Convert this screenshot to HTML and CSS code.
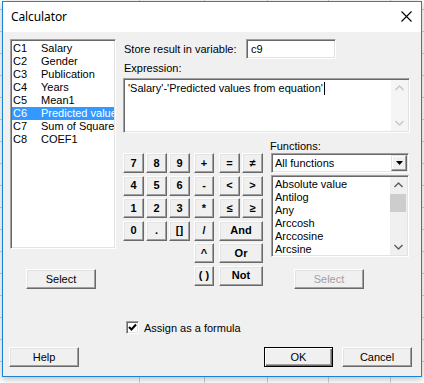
FILE: index.html
```html
<!DOCTYPE html>
<html>
<head>
<meta charset="utf-8">
<link rel="stylesheet" href="styles.css">
</head>
<body>
<div class="window">
  <div class="titlebar">
    <span class="title">Calculator</span>
    <svg class="close" width="11" height="11" viewBox="0 0 11 11"><path d="M0.5 0.5 L10.5 10.5 M10.5 0.5 L0.5 10.5" stroke="#000" stroke-width="1.1" fill="none"/></svg>
  </div>
  <div class="client">
    <div class="top">
      <div class="leftcol">
        <div class="sunken vars">
          <div class="item"><span class="cn">C1</span><span>Salary</span></div>
          <div class="item"><span class="cn">C2</span><span>Gender</span></div>
          <div class="item"><span class="cn">C3</span><span>Publication</span></div>
          <div class="item"><span class="cn">C4</span><span>Years</span></div>
          <div class="item"><span class="cn">C5</span><span>Mean1</span></div>
          <div class="item sel"><span class="cn">C6</span><span>Predicted values from equation</span></div>
          <div class="item"><span class="cn">C7</span><span>Sum of Squares</span></div>
          <div class="item"><span class="cn">C8</span><span>COEF1</span></div>
        </div>
        <div class="btn select-left">Select</div>
      </div>
      <div class="rightcol">
        <div class="storerow">
          <span class="storelabel">Store result in variable:</span>
          <div class="sunken field">c9</div>
        </div>
        <div class="exprlabel">Expression:</div>
        <div class="sunken exprbox">
          <div class="exprtext">'Salary'-'Predicted values from equation'<span class="caret"></span></div>
          <div class="vscroll off">
            <svg width="17" height="17" viewBox="0 0 17 17"><path d="M4.5 10 L8.5 6 L12.5 10" stroke="#c8c8c8" stroke-width="1.5" fill="none"/></svg>
            <svg width="17" height="17" viewBox="0 0 17 17"><path d="M4.5 7 L8.5 11 L12.5 7" stroke="#c8c8c8" stroke-width="1.5" fill="none"/></svg>
          </div>
        </div>
        <div class="lower">
          <div class="keypad">
            <div class="kgrid digits">
              <div class="btn key">7</div><div class="btn key">8</div><div class="btn key">9</div>
              <div class="btn key">4</div><div class="btn key">5</div><div class="btn key">6</div>
              <div class="btn key">1</div><div class="btn key">2</div><div class="btn key">3</div>
              <div class="btn key">0</div><div class="btn key">.</div><div class="btn key">[]</div>
            </div>
            <div class="kgrid ops">
              <div class="btn key">+</div>
              <div class="btn key">-</div>
              <div class="btn key">*</div>
              <div class="btn key">/</div>
              <div class="btn key">^</div>
              <div class="btn key">( )</div>
            </div>
            <div class="kgrid rel">
              <div class="btn key">=</div><div class="btn key">≠</div>
              <div class="btn key">&lt;</div><div class="btn key">&gt;</div>
              <div class="btn key">≤</div><div class="btn key">≥</div>
              <div class="btn key wide">And</div>
              <div class="btn key wide">Or</div>
              <div class="btn key wide">Not</div>
            </div>
          </div>
          <div class="funcs">
            <div class="funclabel">Functions:</div>
            <div class="sunken dropdown">
              <span class="ddtext">All functions</span>
              <div class="ddbtn"><svg width="7" height="4" viewBox="0 0 7 4"><path d="M0 0 H7 L3.5 4 Z" fill="#000"/></svg></div>
            </div>
            <div class="sunken funclist">
              <div class="fitems">
                <div class="fitem">Absolute value</div>
                <div class="fitem">Antilog</div>
                <div class="fitem">Any</div>
                <div class="fitem">Arccosh</div>
                <div class="fitem">Arccosine</div>
                <div class="fitem">Arcsine</div>
              </div>
              <div class="vscroll on">
                <svg width="17" height="17" viewBox="0 0 17 17"><path d="M4.5 10 L8.5 6 L12.5 10" stroke="#606060" stroke-width="1.5" fill="none"/></svg>
                <div class="thumb"></div>
                <div class="track"></div>
                <svg width="17" height="17" viewBox="0 0 17 17"><path d="M4.5 7 L8.5 11 L12.5 7" stroke="#606060" stroke-width="1.5" fill="none"/></svg>
              </div>
            </div>
            <div class="btn disabled select-right">Select</div>
          </div>
        </div>
      </div>
    </div>
    <div class="checkrow">
      <div class="checkbox"><svg width="9" height="9" viewBox="0 0 9 9"><path d="M1 4 L3.5 6.5 L8 1.5" stroke="#000" stroke-width="2" fill="none"/></svg></div>
      <span>Assign as a formula</span>
    </div>
    <div class="buttonrow">
      <div class="btn help">Help</div>
      <div class="rightbtns">
        <div class="btn default">OK</div>
        <div class="btn">Cancel</div>
      </div>
    </div>
  </div>
</div>
</body>
</html>
```

FILE: styles.css
```css
html, body {
  margin: 0;
  padding: 0;
}
body {
  width: 424px;
  height: 383px;
  overflow: hidden;
  font-family: "Liberation Sans", Arial, sans-serif;
  font-size: 11px;
  color: #000;
  background-color: #fff;
  background-image:
    linear-gradient(to right,
      transparent 139px, #d0d0d0 139px, #d0d0d0 140px, transparent 140px,
      transparent 204px, #d0d0d0 204px, #d0d0d0 205px, transparent 205px,
      transparent 267px, #d0d0d0 267px, #d0d0d0 268px, transparent 268px,
      transparent 328px, #d0d0d0 328px, #d0d0d0 329px, transparent 329px,
      transparent 390px, #d0d0d0 390px, #d0d0d0 391px, transparent 391px),
    repeating-linear-gradient(to bottom,
      transparent 0, transparent 9px, #d0d0d0 9px, #d0d0d0 10px, transparent 10px, transparent 22px);
}
.window {
  position: absolute;
  left: 2px;
  top: 1px;
  width: 418px;
  height: 374px;
  border: 1px solid #1883d7;
  background: #f0f0f0;
  display: flex;
  flex-direction: column;
  box-shadow: 0 2px 7px rgba(0, 0, 0, 0.28);
}
.titlebar {
  height: 30px;
  flex: none;
  background: #fff;
  display: flex;
  align-items: center;
  justify-content: space-between;
  padding: 0 9px 0 8px;
}
.title {
  font-family: "Noto Sans", "Open Sans", sans-serif;
  font-size: 12px;
  letter-spacing: -0.1px;
  margin-top: -1px;
}
.close {
  display: block;
  margin-top: -1px;
}
.client {
  flex: 1;
  display: flex;
  flex-direction: column;
  padding: 7px 0 0 7px;
}
.top {
  display: flex;
  align-items: flex-start;
}
.sunken {
  box-sizing: border-box;
  background: #fff;
  border: 1px solid;
  border-color: #a0a0a0 #fff #fff #a0a0a0;
  box-shadow: inset 1px 1px #696969, inset -1px -1px #e3e3e3;
}
.leftcol {
  width: 106px;
  display: flex;
  flex-direction: column;
}
.vars {
  height: 210px;
  padding: 2px 1px 1px 1px;
  overflow: hidden;
}
.item {
  display: flex;
  height: 13px;
  line-height: 13px;
  padding-left: 1px;
  white-space: nowrap;
  overflow: hidden;
}
.item .cn {
  width: 28px;
  flex: none;
}
.item.sel {
  background: #3399ff;
  color: #fff;
}
.btn {
  box-sizing: border-box;
  width: 70px;
  height: 20px;
  background: #f0f0f0;
  border: 1px solid;
  border-color: #fff #696969 #696969 #fff;
  box-shadow: inset -1px -1px #a0a0a0, inset 1px 1px #e3e3e3;
  display: flex;
  align-items: center;
  justify-content: center;
  line-height: 13px;
  white-space: nowrap;
}
.btn.disabled {
  color: #a0a0a0;
}
.btn.default {
  border-color: #000;
  box-shadow: inset 1px 1px #fff, inset -1px -1px #696969, inset -2px -2px #a0a0a0;
  width: 69px;
}
.select-left {
  margin: 20px 0 0 16px;
}
.rightcol {
  margin-left: 7px;
  width: 287px;
}
.storerow {
  display: flex;
  align-items: center;
  height: 20px;
}
.storelabel {
  width: 122px;
  padding-left: 1px;
}
.field {
  width: 90px;
  height: 20px;
  padding: 2px 4px;
  line-height: 14px;
}
.exprlabel {
  height: 19px;
  line-height: 19px;
  padding-left: 1px;
}
.exprbox {
  height: 55px;
  display: flex;
  padding: 1px;
}
.exprtext {
  flex: 1;
  padding: 2px 3px;
  line-height: 13px;
  white-space: nowrap;
}
.caret {
  display: inline-block;
  width: 1px;
  height: 13px;
  background: #000;
  vertical-align: top;
  margin-left: 1px;
}
.vscroll {
  width: 17px;
  flex: none;
  background: #f0f0f0;
  display: flex;
  flex-direction: column;
  justify-content: space-between;
}
.vscroll.off {
  background: #f5f5f5;
}
.vscroll svg {
  display: block;
}
.vscroll.on {
  justify-content: flex-start;
}
.thumb {
  height: 18px;
  background: #cdcdcd;
  margin: 0 1px 0 0;
}
.track {
  flex: 1;
}
.lower {
  display: flex;
  margin-top: 6px;
}
.keypad {
  width: 140px;
  padding-top: 14px;
  display: flex;
}
.kgrid {
  display: grid;
  grid-auto-rows: 20px;
  row-gap: 2.6px;
  column-gap: 2px;
  align-content: start;
}
.digits {
  grid-template-columns: 21px 21px 21px;
}
.ops {
  grid-template-columns: 20px;
  margin-left: 4px;
}
.rel {
  grid-template-columns: 21px 21px;
  margin-left: 5px;
}
.key {
  width: auto;
  font-weight: bold;
  font-size: 11px;
}
.key.wide {
  grid-column: span 2;
}
.funcs {
  margin-left: 8px;
  width: 138px;
  display: flex;
  flex-direction: column;
}
.funclabel {
  height: 14px;
  line-height: 14px;
  margin-left: -1px;
}
.dropdown {
  height: 20px;
  display: flex;
  align-items: center;
  padding: 1px 1px 1px 3px;
}
.ddtext {
  flex: 1;
  line-height: 13px;
}
.ddbtn {
  box-sizing: border-box;
  width: 16px;
  height: 16px;
  background: #f0f0f0;
  border: 1px solid;
  border-color: #e3e3e3 #696969 #696969 #e3e3e3;
  box-shadow: inset -1px -1px #a0a0a0, inset 1px 1px #fff;
  display: flex;
  align-items: center;
  justify-content: center;
}
.ddbtn svg {
  display: block;
}
.funclist {
  margin-top: 2px;
  height: 82px;
  display: flex;
  padding: 1px;
}
.fitems {
  flex: 1;
  padding: 1px 0 0 2px;
  overflow: hidden;
}
.fitem {
  height: 13px;
  line-height: 13px;
  white-space: nowrap;
}
.select-right {
  margin: 12px 0 0 23px;
}
.checkrow {
  display: flex;
  align-items: center;
  height: 13px;
  margin: 32px 0 0 116px;
}
.checkbox {
  box-sizing: border-box;
  width: 13px;
  height: 13px;
  background: #fff;
  border: 1px solid;
  border-color: #a0a0a0 #fff #fff #a0a0a0;
  box-shadow: inset 1px 1px #696969, inset -1px -1px #e3e3e3;
  display: flex;
  align-items: center;
  justify-content: center;
  margin-right: 5px;
}
.checkbox svg {
  display: block;
}
.buttonrow {
  display: flex;
  margin-top: 13px;
  padding-right: 9px;
}
.help {
  margin-left: -1px;
}
.rightbtns {
  margin-left: auto;
  display: flex;
  gap: 9px;
}
```
